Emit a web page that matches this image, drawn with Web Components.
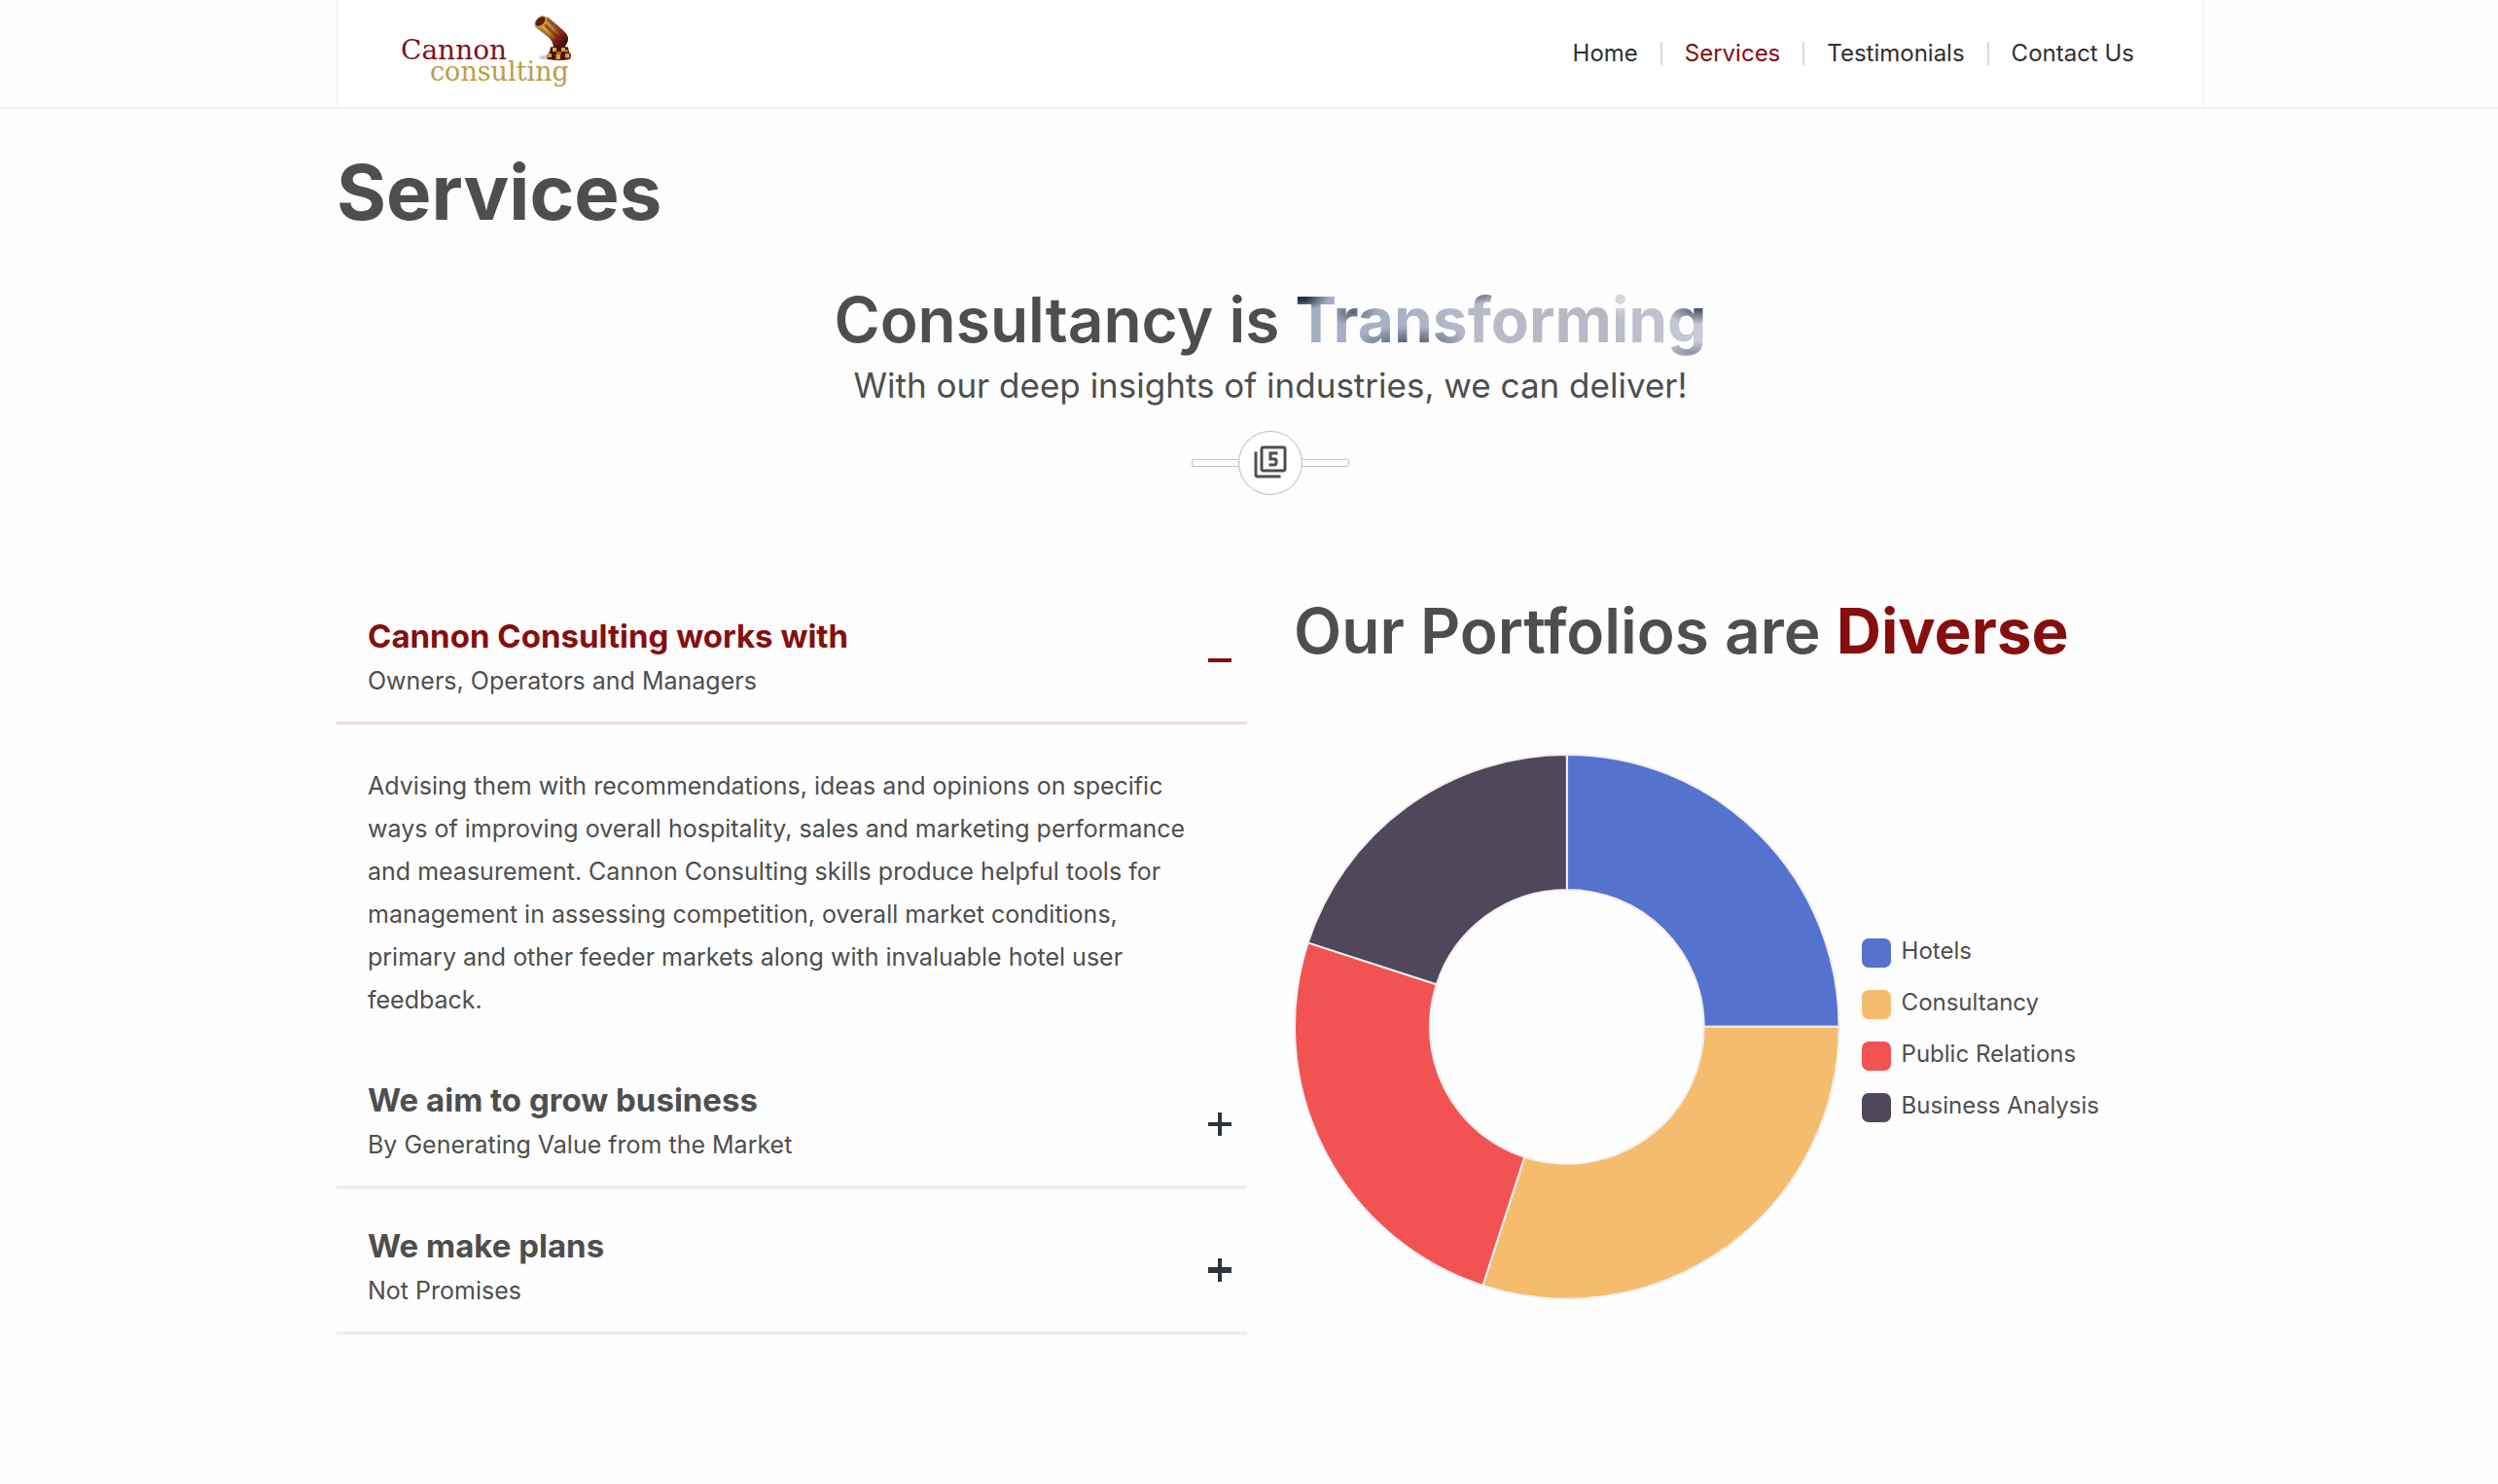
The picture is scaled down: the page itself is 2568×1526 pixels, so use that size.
<!DOCTYPE html>
<html lang="en">
<head>
<meta charset="utf-8">
<meta name="viewport" content="width=device-width, initial-scale=1">
<title>Services – Cannon Consulting</title>
<style>
  :root {
    --ink: #4e4e4e;
    --brand: #870e0e;
    --gutter: 44px;
    --content: 1920px;
  }
  body {
    margin: 0;
    background: #fefefe;
    color: var(--ink);
    font: 400 25px/44px Inter, "Open Sans", sans-serif;
  }
</style>
</head>
<body>
<cannon-page></cannon-page>

<template id="cannon-logo">
  <style>
    :host { display: block; }
    a, svg { display: block; }
    text { font-family: "DejaVu Serif", serif; }
  </style>
  <a href="#home" aria-label="Cannon Consulting home">
    <svg width="180" height="90" viewBox="410 10 180 90">
      <defs>
        <linearGradient id="barrel" gradientUnits="userSpaceOnUse" x1="557" y1="36" x2="572" y2="21">
          <stop offset="0" stop-color="#c39a3a"/><stop offset=".2" stop-color="#a8742a"/>
          <stop offset=".32" stop-color="#e2bb55"/><stop offset=".46" stop-color="#8a3a1a"/>
          <stop offset=".58" stop-color="#d9a848"/><stop offset=".74" stop-color="#8a4a20"/>
          <stop offset="1" stop-color="#b98632"/>
        </linearGradient>
        <linearGradient id="breech" gradientUnits="userSpaceOnUse" x1="562" y1="27" x2="580" y2="46">
          <stop offset="0" stop-color="#6c2012" stop-opacity="0"/>
          <stop offset=".3" stop-color="#7a2416" stop-opacity=".3"/>
          <stop offset=".65" stop-color="#7a1d14"/><stop offset="1" stop-color="#3b0d0d"/>
        </linearGradient>
      </defs>
      <ellipse cx="564" cy="59" rx="10" ry="2.4" fill="#b9b9bd" opacity=".7"/>
      <path d="M550 28 563 17.500C570 23 577 29 581.500 34 585 38 585 43 580 48.500L569 48.500C568.500 43 566 39.500 561 36Z" fill="url(#barrel)"/>
      <path d="M550 28 563 17.500C570 23 577 29 581.500 34 585 38 585 43 580 48.500L569 48.500C568.500 43 566 39.500 561 36Z" fill="url(#breech)"/>
      <ellipse cx="556" cy="22.500" rx="7.500" ry="5" transform="rotate(-42 556 22.500)" fill="#c79a3c"/>
      <ellipse cx="555.500" cy="22" rx="5.800" ry="3.600" transform="rotate(-42 555.500 22)" fill="#54200f"/>
      <path d="M566 48.500Q575 46.500 584 48.500L585 53.500 587 56 586.500 60.500Q575 63.500 562.500 60.500L562.500 56 565 53.500Z" fill="#4c120e"/>
      <path d="M568 49h4v4h-4zM577 49h4v4h-4zM563 55h4v4h-4zM571.500 56h4.500v5h-4.500zM581 55h4.500v4.500h-4.500z" fill="#d2a142"/>
      <path d="M572 53h5v3h-5zM581 51h3v3h-3z" fill="#a5681f"/>
      <text x="412" y="61" font-size="28" fill="#7d1220">Cannon</text>
      <text x="442" y="83" font-size="27" fill="#bd9c45">consulting</text>
    </svg>
  </a>
</template>

<template id="site-header">
  <style>
    :host {
      display: block;
      padding-left: var(--gutter);
      border-bottom: 2px solid #eeeeee;
    }
    .bar {
      box-sizing: border-box;
      max-width: var(--content);
      height: 110px;
      margin: 0 auto;
      padding: 0 70px 0 62px;
      display: flex;
      align-items: center;
      justify-content: space-between;
      background: #fff;
      border: solid #f6f6f6;
      border-width: 0 2px;
    }
    nav { display: flex; align-items: center; }
    ::slotted(a) {
      padding: 0 23px;
      border-left: 2px solid #d8d8d8;
      font-size: 24px;
      line-height: 24px;
      color: #303030;
      text-decoration: none;
    }
    ::slotted(a:first-child) { border-left: 0; }
    ::slotted(a:last-child) { padding-right: 0; }
    ::slotted(a[aria-current]) { color: var(--brand); }
  </style>
  <div class="bar">
    <cannon-logo></cannon-logo>
    <nav aria-label="Main"><slot></slot></nav>
  </div>
</template>

<template id="section-intro">
  <style>
    :host { display: flex; flex-direction: column; align-items: center; text-align: center; }
    h2 { margin: 0; font-size: 64px; line-height: 80px; font-weight: 600; }
    p { margin: 3px 0 23px; font-size: 35px; line-height: 48px; }
    ::slotted(strong) {
      font-weight: 700;
      color: transparent;
      background:
        radial-gradient(ellipse 30px 12px at 1% 22%, #262f44 0 20%, transparent),
        radial-gradient(ellipse 26px 14px at 14% 40%, #59647c, transparent),
        radial-gradient(ellipse 60px 18px at 28% 82%, #4c566e, transparent),
        radial-gradient(ellipse 26px 12px at 44% 14%, #555c72, transparent),
        radial-gradient(ellipse 34px 16px at 98% 36%, #444b5e, transparent),
        radial-gradient(ellipse 30px 12px at 96% 94%, #8f93a5, transparent),
        radial-gradient(ellipse 22px 20px at 79% 26%, #dcdfe4, transparent),
        linear-gradient(90deg, #a2adc0, #a9b2c4 25%, #b9bac8 45%, #b6b8c6 75%, #c9cdd6);
      -webkit-background-clip: text;
      background-clip: text;
    }
    .rule { display: flex; align-items: center; }
    .rule::before, .rule::after {
      content: "";
      box-sizing: border-box;
      width: 48px;
      height: 8px;
      border: 1px solid #c4c4c4;
    }
    .rule::before { border-right: 0; border-radius: 2px 0 0 2px; }
    .rule::after { border-left: 0; border-radius: 0 2px 2px 0; }
    .badge {
      box-sizing: border-box;
      width: 66px;
      height: 66px;
      padding-bottom: 2px;
      border: 1px solid #b9b9b9;
      border-radius: 50%;
      display: grid;
      place-items: center;
      background: #fff;
    }
    svg { width: 36px; height: 36px; fill: currentColor; }
  </style>
  <h2><slot name="title"></slot></h2>
  <p><slot></slot></p>
  <div class="rule">
    <span class="badge">
      <svg viewBox="0 0 24 24" aria-hidden="true"><path d="M21 1H7c-1.100 0-2 .9-2 2v14c0 1.100.9 2 2 2h14c1.100 0 2-.9 2-2V3c0-1.100-.9-2-2-2zm0 16H7V3h14v14zM3 5H1v16c0 1.100.9 2 2 2h16v-2H3V5zm14 8v-2c0-1.110-.9-2-2-2h-2V7h4V5h-6v6h4v2h-4v2h4c1.100 0 2-.89 2-2z"/></svg>
    </span>
  </div>
</template>

<template id="accordion-item">
  <style>
    :host { display: block; }
    h3 { margin: 0; font: inherit; }
    button {
      width: 100%;
      padding: 36px 16px 20px 32px;
      border: 0;
      border-bottom: 4px solid #f2eeea;
      display: flex;
      align-items: center;
      justify-content: space-between;
      background: none;
      color: inherit;
      font: inherit;
      text-align: left;
      cursor: pointer;
    }
    .label { display: flex; flex-direction: column; gap: 2px; }
    .title { font-size: 33px; font-weight: 700; }
    svg { width: 24px; height: 24px; padding-top: 4px; fill: #2d3540; }
    .panel { padding: 41px 48px 23px 32px; }
    p { margin: 0; }
    :host(:not([open])) .panel { display: none; }
    :host([open]) button { border-bottom: 3px solid #eddcdc; }
    :host([open]) .title { color: var(--brand); }
    :host([open]) svg { fill: var(--brand); }
    :host([open]) .stem { display: none; }
    .heavy { display: none; }
    :host([heavy]) .heavy { display: inline; }
  </style>
  <h3>
    <button type="button" aria-controls="panel">
      <span class="label">
        <span class="title"><slot name="title"></slot></span>
        <span><slot name="subtitle"></slot></span>
      </span>
      <svg viewBox="0 0 24 24" aria-hidden="true">
        <path d="M0 10h24v4H0z"/>
        <path class="stem" d="M10 0h4v24h-4z"/>
        <path class="heavy" d="M0 9h24v6H0z"/>
      </svg>
    </button>
  </h3>
  <div class="panel" id="panel"><p><slot></slot></p></div>
</template>

<template id="donut-chart">
  <style>
    :host { display: flex; align-items: center; gap: 22px; }
    svg { width: 60%; flex: none; display: block; }
    path { stroke: #efefef; stroke-width: 2; stroke-linejoin: round; }
    ul { margin: 0; padding: 7px 0 0; list-style: none; display: grid; gap: 23px; }
    li { display: flex; align-items: flex-start; gap: 11px; font-size: 24px; line-height: 26px; white-space: nowrap; }
    i { width: 30px; height: 30px; border-radius: 7px; }
  </style>
  <svg viewBox="-281 -281 562 562" role="img" aria-label="Portfolio share by area"></svg>
  <ul></ul>
</template>

<template id="cannon-page">
  <style>
    :host { display: block; }
    main { padding-left: var(--gutter); }
    .content { max-width: var(--content); margin: 0 auto; padding: 38px 0 88px; }
    h1 { margin: 0 0 43px; font-size: 78px; line-height: 96px; font-weight: 700; }
    .columns {
      display: grid;
      grid-template-columns: 1fr 1fr;
      gap: 48px;
      margin-top: 87px;
    }
    .portfolio h2 { margin: 13px 0 86px; font-size: 64px; line-height: 80px; font-weight: 600; }
    .portfolio strong { font-weight: 700; color: var(--brand); }
  </style>
  <site-header>
    <a href="#home">Home</a>
    <a href="#services" aria-current="page">Services</a>
    <a href="#testimonials">Testimonials</a>
    <a href="#contact">Contact Us</a>
  </site-header>
  <main>
    <div class="content">
      <h1>Services</h1>
      <section-intro>
        <span slot="title">Consultancy is</span>
        <strong slot="title">Transforming</strong>
        With our deep insights of industries, we can deliver!
      </section-intro>
      <div class="columns">
        <section>
          <accordion-item open>
            <span slot="title">Cannon Consulting works with</span>
            <span slot="subtitle">Owners, Operators and Managers</span>
            Advising them with recommendations, ideas and opinions on specific ways of improving overall hospitality, sales and marketing performance and measurement. Cannon Consulting skills produce helpful tools for management in assessing competition, overall market conditions, primary and other feeder markets along with invaluable hotel user feedback.
          </accordion-item>
          <accordion-item>
            <span slot="title">We aim to grow business</span>
            <span slot="subtitle">By Generating Value from the Market</span>
          </accordion-item>
          <accordion-item heavy>
            <span slot="title">We make plans</span>
            <span slot="subtitle">Not Promises</span>
          </accordion-item>
        </section>
        <section class="portfolio">
          <h2>Our Portfolios are <strong>Diverse</strong></h2>
          <donut-chart></donut-chart>
        </section>
      </div>
    </div>
  </main>
</template>

<script>
  class TemplateElement extends HTMLElement {
    constructor() {
      super();
      const template = document.getElementById(this.localName);
      this.attachShadow({ mode: 'open' }).append(template.content.cloneNode(true));
    }
  }

  class CannonLogo extends TemplateElement {}
  class SiteHeader extends TemplateElement {}

  class SectionIntro extends TemplateElement {
    connectedCallback() {
      // A word space between the two slotted halves of the title.
      const lead = this.querySelector('span[slot="title"]');
      if (lead && !lead.textContent.endsWith(' ')) lead.textContent += ' ';
    }
  }

  class AccordionItem extends TemplateElement {
    connectedCallback() {
      const button = this.shadowRoot.querySelector('button');
      const sync = () => button.setAttribute('aria-expanded', this.hasAttribute('open'));
      button.onclick = () => { this.toggleAttribute('open'); sync(); };
      sync();
    }
  }

  class DonutChart extends TemplateElement {
    connectedCallback() {
      const shares = [
        ['Hotels', 25, '#5572cf'],
        ['Consultancy', 30, '#f6bc6e'],
        ['Public Relations', 25, '#f25352'],
        ['Business Analysis', 20, '#50475a']
      ];
      const outer = 280, inner = 141;
      const point = (r, share) => {
        const angle = share / 50 * Math.PI;
        return `${r * Math.sin(angle)} ${-r * Math.cos(angle)}`;
      };
      let start = 0, paths = '', rows = '';
      for (const [name, share, color] of shares) {
        const end = start + share;
        paths += `<path fill="${color}" d="M${point(outer, start)}A${outer} ${outer} 0 0 1 ${point(outer, end)}L${point(inner, end)}A${inner} ${inner} 0 0 0 ${point(inner, start)}Z"/>`;
        rows += `<li><i style="background:${color}"></i>${name}</li>`;
        start = end;
      }
      this.shadowRoot.querySelector('svg').innerHTML = paths;
      this.shadowRoot.querySelector('ul').innerHTML = rows;
    }
  }

  class CannonPage extends TemplateElement {}

  customElements.define('cannon-logo', CannonLogo);
  customElements.define('site-header', SiteHeader);
  customElements.define('section-intro', SectionIntro);
  customElements.define('accordion-item', AccordionItem);
  customElements.define('donut-chart', DonutChart);
  customElements.define('cannon-page', CannonPage);
</script>
</body>
</html>
